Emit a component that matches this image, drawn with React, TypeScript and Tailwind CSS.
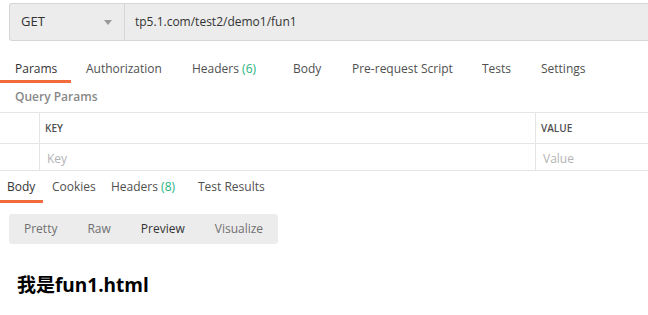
const reqTabs = [
  { name: "Params", w: "w-[71px]", active: true },
  { name: "Authorization", w: "w-[106px]" },
  { name: "Headers", w: "w-[101px]", count: "(6)" },
  { name: "Body", w: "w-[59px]" },
  { name: "Pre-request Script", w: "w-[130px]" },
  { name: "Tests", w: "w-[59px]" },
  { name: "Settings", w: "w-[90px]" },
];

const resTabs = [
  { name: "Body", w: "w-[43px] pl-[7px]", active: true },
  { name: "Cookies", w: "w-[60px] pl-[9px]" },
  { name: "Headers", w: "w-[87px] pl-[8px]", count: "(8)" },
  { name: "Test Results", w: "w-[100px] pl-[8px]" },
];

const views = ["Pretty", "Raw", "Preview", "Visualize"];

export default function App() {
  return (
    <div
      className="w-[648px] h-[315px] overflow-hidden bg-white text-[#505050] text-[12px]"
      style={{ fontFamily: '"Open Sans", "Noto Sans", sans-serif' }}
    >
      {/* url bar */}
      <div className="pt-[3px] pl-[9px]">
        <div className="flex h-[38px] bg-[#ececec] border border-r-0 border-[#d6d6d6] rounded-l-[3px]">
          <div className="w-[115px] flex items-center justify-between pl-[11px] pr-[12px] border-r border-[#d6d6d6] text-[#333] text-[13px]">
            <span>GET</span>
            <svg width="8" height="5" viewBox="0 0 8 5">
              <path d="M0 0h8L4 5z" fill="#9a9a9a" />
            </svg>
          </div>
          <div className="flex items-center pl-[10px] text-[#333] text-[12px]">
            tp5.1.com/test2/demo1/fun1
          </div>
        </div>
      </div>

      {/* request tabs */}
      <div className="flex mt-[19px]">
        {reqTabs.map((t) => (
          <div
            key={t.name}
            className={`${t.w} shrink-0 whitespace-nowrap pl-[15px] pb-[3px] leading-[17px] border-b-[3px] ${
              t.active ? "border-[#f26b3a] text-[#333]" : "border-transparent"
            }`}
          >
            {t.name}
            {t.count && <span className="text-[#26b47f]"> {t.count}</span>}
          </div>
        ))}
      </div>

      <div className="pl-[15px] pt-[5px] h-[29px] font-semibold text-[#888] text-[12px]">
        Query Params
      </div>

      {/* params table */}
      <div className="border-t border-b border-[#e5e5e5]">
        <div className="flex h-[31px] border-b border-[#e5e5e5]">
          <div className="w-[40px] border-r border-[#e5e5e5]" />
          <div className="w-[496px] border-r border-[#e5e5e5] flex items-center pl-[5px] text-[10px] font-semibold text-[#505050]">
            KEY
          </div>
          <div className="flex items-center pl-[5px] text-[10px] font-semibold text-[#505050]">
            VALUE
          </div>
        </div>
        <div className="flex h-[26px]">
          <div className="w-[40px] border-r border-[#e5e5e5]" />
          <div className="w-[496px] border-r border-[#e5e5e5] flex items-center pt-[3px] pl-[7px] text-[#b3b3b3]">
            Key
          </div>
          <div className="flex items-center pt-[3px] pl-[7px] text-[#b3b3b3]">Value</div>
        </div>
      </div>

      {/* response tabs */}
      <div className="flex mt-[7px] h-[25px]">
        {resTabs.map((t) => (
          <div
            key={t.name}
            className={`${t.w} shrink-0 whitespace-nowrap leading-[17px] pb-[5px] border-b-[3px] ${
              t.active ? "border-[#f26b3a] text-[#333]" : "border-transparent"
            }`}
          >
            {t.name}
            {t.count && <span className="text-[#26b47f]"> {t.count}</span>}
          </div>
        ))}
      </div>

      <div className="pl-[9px] mt-[11px]">
        <div className="flex w-[269px] h-[30px] bg-[#ececec] rounded-[3px] items-center gap-[30px] pl-[15px]">
          {views.map((v) => (
            <span
              key={v}
              className={v === "Preview" ? "text-[#333]" : "text-[#707070]"}
            >
              {v}
            </span>
          ))}
        </div>
      </div>

      <div
        className="pl-[17px] mt-[29px] text-[19px] font-bold text-black leading-[24px]"
        style={{ fontFamily: '"Open Sans", "Noto Sans CJK SC", sans-serif' }}
      >
        我是fun1.html
      </div>
    </div>
  );
}
